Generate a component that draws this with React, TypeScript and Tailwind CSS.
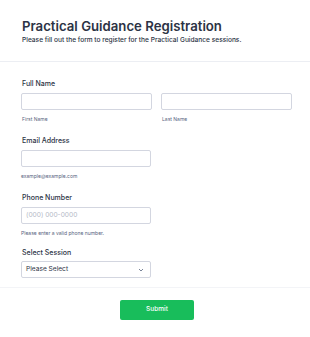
export default function App() {
  const font = { fontFamily: 'Inter, "Noto Sans", sans-serif' };
  return (
    <div style={font} className="w-[310px] h-[337px] bg-white text-[#2c3345] overflow-hidden">
      <div className="px-[22px] pt-[18px] h-[62px] border-b border-[#eceef3]">
        <h1 className="text-[13.2px] leading-[16px] font-semibold">Practical Guidance Registration</h1>
        <p className="text-[6.6px] leading-[10px] font-medium mt-[1px]">Please fill out the form to register for the Practical Guidance sessions.</p>
      </div>
      <div className="pl-[21px] pt-[17px] h-[226px] border-b border-[#f3f4f7]">
        <label className="block text-[7px] leading-[10px] font-medium pl-[1px]">Full Name</label>
        <div className="flex gap-[9px] mt-[4px]">
          <div className="w-[131px] shrink-0">
            <div className="h-[17px] border border-[#d3d6e0] rounded-[2px]" />
            <div className="text-[5px] leading-[8px] text-[#57647e] mt-[5px] pl-[1px]">First Name</div>
          </div>
          <div className="w-[131px] shrink-0">
            <div className="h-[17px] border border-[#d3d6e0] rounded-[2px]" />
            <div className="text-[5px] leading-[8px] text-[#57647e] mt-[5px] pl-[1px]">Last Name</div>
          </div>
        </div>
        <label className="block text-[7px] leading-[10px] font-medium pl-[1px] mt-[13px]">Email Address</label>
        <div className="w-[130px] h-[17px] border border-[#d3d6e0] rounded-[2px] mt-[4px]" />
        <div className="text-[5px] leading-[8px] text-[#57647e] mt-[5px]">example@example.com</div>
        <label className="block text-[7px] leading-[10px] font-medium pl-[1px] mt-[13px]">Phone Number</label>
        <div className="w-[130px] h-[17px] border border-[#d3d6e0] rounded-[2px] mt-[4px] flex items-center pl-[4px] text-[6.6px] text-[#b5bac7]">(000) 000-0000</div>
        <div className="text-[5px] leading-[8px] text-[#57647e] mt-[5px]">Please enter a valid phone number.</div>
        <label className="block text-[7px] leading-[10px] font-medium pl-[1px] mt-[11px]">Select Session</label>
        <div className="w-[130px] h-[17px] border border-[#d3d6e0] rounded-[2px] mt-[3px] flex items-center justify-between pl-[4px] pr-[6px] text-[6.6px] text-[#2c3345]">
          <span>Please Select</span>
          <svg width="6" height="4" viewBox="0 0 6 4" fill="none"><path d="M1 1l2 2 2-2" stroke="#57647e" strokeWidth="0.8" /></svg>
        </div>
      </div>
      <div className="flex justify-center pt-[12px] pl-[4px]">
        <button className="w-[74px] h-[20px] bg-[#18bd5b] rounded-[2px] text-white text-[6.5px] font-medium">Submit</button>
      </div>
    </div>
  );
}
